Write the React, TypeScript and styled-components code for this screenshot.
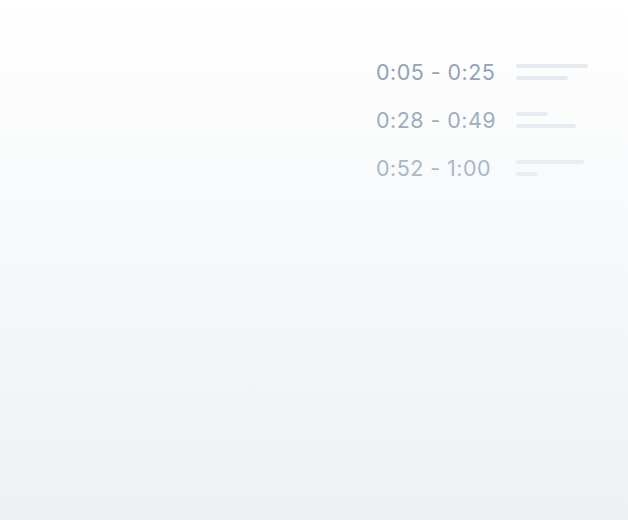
import styled, { createGlobalStyle } from "styled-components";

const GlobalStyle = createGlobalStyle`
  html, body {
    margin: 0;
    padding: 0;
  }
  body {
    font-family: "Inter", "Noto Sans", sans-serif;
  }
`;

const Page = styled.div`
  width: 628px;
  height: 520px;
  box-sizing: border-box;
  padding: 56px 40px 0 0;
  display: flex;
  justify-content: flex-end;
  align-items: flex-start;
  background: linear-gradient(180deg, #ffffff 0%, #f9fafb 35%, #f3f5f7 70%, #eef1f4 100%);
`;

const SegmentList = styled.ul`
  list-style: none;
  margin: 0;
  padding: 0;
  display: flex;
  flex-direction: column;
  gap: 16px;
`;

const Segment = styled.li<{ $fade: number }>`
  display: flex;
  align-items: center;
  gap: 20px;
  height: 32px;
  opacity: ${(p) => p.$fade};
`;

const Range = styled.span`
  width: 120px;
  font-size: 21.5px;
  font-weight: 400;
  letter-spacing: 0.45px;
  color: #94a3b8;
  white-space: nowrap;
`;

const Lines = styled.div`
  display: flex;
  flex-direction: column;
  gap: 8px;
  width: 72px;
`;

const Line = styled.span<{ $w: number }>`
  display: block;
  height: 4px;
  width: ${(p) => p.$w}px;
  border-radius: 2px;
  background: #e6eaef;
`;

const segments = [
  { range: "0:05 - 0:25", lines: [72, 52], fade: 1 },
  { range: "0:28 - 0:49", lines: [32, 60], fade: 0.88 },
  { range: "0:52 - 1:00", lines: [68, 22], fade: 0.76 },
];

export default function App() {
  return (
    <>
      <GlobalStyle />
      <Page>
        <SegmentList>
          {segments.map((s) => (
            <Segment key={s.range} $fade={s.fade}>
              <Range>{s.range}</Range>
              <Lines>
                {s.lines.map((w, i) => (
                  <Line key={i} $w={w} />
                ))}
              </Lines>
            </Segment>
          ))}
        </SegmentList>
      </Page>
    </>
  );
}
